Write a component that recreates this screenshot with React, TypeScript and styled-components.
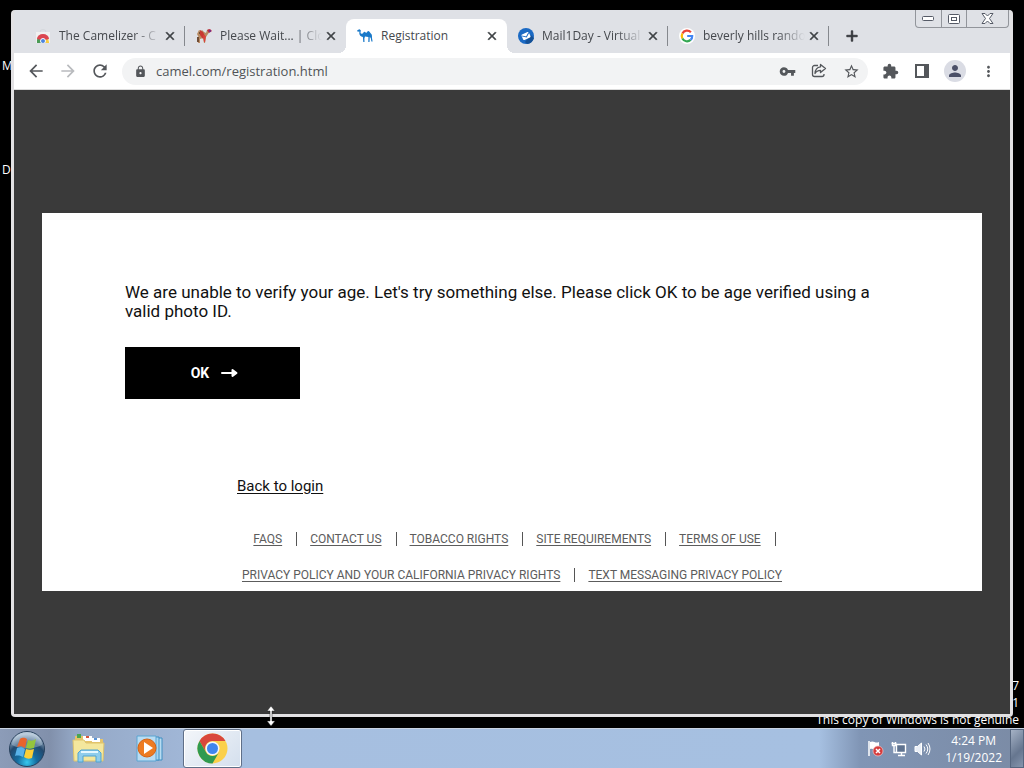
import React from 'react';
import styled, { createGlobalStyle } from 'styled-components';
import {
  MdAdd,
  MdArrowBack,
  MdArrowForward,
  MdClose,
  MdExtension,
  MdLock,
  MdMoreVert,
  MdPerson,
  MdRefresh,
  MdStarBorder,
  MdVpnKey,
} from 'react-icons/md';

const systemFont = '"Open Sans", "Noto Sans", sans-serif';

const GlobalStyle = createGlobalStyle`
  *, *::before, *::after { box-sizing: border-box; }
  body { margin: 0; background: #000; }
  button, input { font: inherit; color: inherit; }
  button { border: 0; padding: 0; background: none; }
`;

const Desktop = styled.div`
  position: relative;
  display: flex;
  flex-direction: column;
  min-height: 100vh;
  background: #000;
  font-family: ${systemFont};
  overflow: hidden;
`;

const WorkArea = styled.main`
  flex: 1;
  display: flex;
  padding: 10px 11px 11px 11px;
`;

const DesktopLabel = styled.span<{ $top: number }>`
  position: absolute;
  left: 2px;
  top: ${(p) => p.$top}px;
  font-size: 12px;
  line-height: 16px;
  color: #fff;
`;

const Watermark = styled.div`
  position: absolute;
  right: 5px;
  bottom: 40px;
  font-size: 12px;
  line-height: 17px;
  text-align: right;
  color: #fff;
`;

const BrowserWindow = styled.section`
  position: relative;
  flex: 1;
  min-width: 0;
  display: flex;
  flex-direction: column;
  border: solid #e2e1e3;
  border-width: 0 3px 3px;
  border-radius: 4px;
  background: #dfe1e6;
`;

const TabStrip = styled.header`
  display: flex;
  height: 43px;
  padding: 9px 0 0 10px;
`;

const Tab = styled.div<{ $active?: boolean; $divided?: boolean }>`
  position: relative;
  flex: 0 1 161px;
  min-width: 0;
  display: flex;
  align-items: center;
  padding: 0 8px 0 11px;
  border-radius: 8px 8px 0 0;
  background: ${(p) => (p.$active ? '#fff' : 'transparent')};

  &::before, &::after {
    content: '';
    position: absolute;
    bottom: 0;
    width: 8px;
    height: 8px;
    display: ${(p) => (p.$active ? 'block' : 'none')};
  }
  &::before {
    left: -8px;
    background: radial-gradient(circle at 0 0, transparent 8px, #fff 8px);
  }
  &::after {
    right: -8px;
    background: radial-gradient(circle at 100% 0, transparent 8px, #fff 8px);
  }
  ${(p) =>
    p.$divided &&
    `&::after {
      display: block;
      right: 0;
      bottom: 7px;
      width: 1px;
      height: 20px;
      background: #85888d;
    }`}
`;

const TabTitle = styled.button<{ $fade?: boolean }>`
  flex: 1;
  min-width: 0;
  overflow: hidden;
  white-space: nowrap;
  text-align: left;
  font-size: 12px;
  line-height: 20px;
  color: #45484d;
  ${(p) => p.$fade && 'mask-image: linear-gradient(90deg, #000 72%, transparent 98%);'}
`;

const TabIcon = styled.svg`
  flex: none;
  width: 16px;
  height: 16px;
  margin-right: 8px;
`;

const CloseTab = styled.button`
  display: flex;
  color: #3c4043;
  font-size: 14px;
  svg path:last-child { stroke: currentColor; stroke-width: 1; }
`;

const NewTab = styled.button`
  display: flex;
  align-items: center;
  margin-left: 14px;
  color: #303338;
  font-size: 18px;
  svg path:last-child { stroke: currentColor; stroke-width: 1; }
`;

const WindowControls = styled.div`
  position: absolute;
  top: 0;
  right: 1px;
  display: flex;
  border: 1px solid #92959b;
  border-top: 0;
  border-radius: 0 0 4px 4px;
`;

const WindowControl = styled.button<{ $wide?: boolean }>`
  display: flex;
  align-items: center;
  justify-content: center;
  width: ${(p) => (p.$wide ? 42 : 25)}px;
  height: 17px;
  & + & { border-left: 1px solid #92959b; }
`;

const Toolbar = styled.nav`
  display: flex;
  align-items: center;
  gap: 12px;
  height: 37px;
  padding: 0 12px;
  border-bottom: 1px solid #dcdcdc;
  background: #fff;
  color: #54575b;
`;

const ToolButton = styled.button<{ $faded?: boolean }>`
  flex: none;
  display: flex;
  align-items: center;
  justify-content: center;
  width: 20px;
  height: 20px;
  font-size: ${(p) => (p.$faded === undefined ? 17 : 20)}px;
  color: ${(p) => (p.$faded ? '#b9bbbe' : 'inherit')};
`;

const AddressBar = styled.div`
  flex: 1;
  min-width: 0;
  display: flex;
  align-items: center;
  gap: 12px;
  height: 27px;
  padding: 0 7px 0 12px;
  border-radius: 14px;
  background: #f2f3f4;
`;

const AddressLabel = styled.label`
  flex: 1;
  min-width: 0;
  display: flex;
  align-items: center;
  gap: 9px;
  font-size: 13px;
`;

const AddressInput = styled.input`
  flex: 1;
  min-width: 0;
  padding: 0;
  border: 0;
  outline: 0;
  line-height: 20px;
  background: transparent;
  color: #505357;
`;

const Avatar = styled.button`
  display: flex;
  align-items: center;
  justify-content: center;
  width: 22px;
  height: 22px;
  border-radius: 50%;
  background: #dadce4;
  color: #4b5068;
  font-size: 18px;
`;

const Page = styled.div`
  flex: 1;
  display: flex;
  flex-direction: column;
  justify-content: center;
  padding: 28px;
  background: #3a3a3a;
  font-family: Roboto, sans-serif;
`;

const Card = styled.article`
  padding: 70px 83px 8px;
  background: #fff;
  color: #111;
`;

const Message = styled.p`
  margin: 0 0 26px;
  font-size: 17px;
  line-height: 19px;
`;

const OkButton = styled.button`
  display: flex;
  align-items: center;
  justify-content: center;
  gap: 12px;
  width: 175px;
  height: 52px;
  padding-left: 4px;
  background: #000;
  color: #fff;
  font: bold 14px Roboto, sans-serif;
`;

const LowerBlock = styled.div`
  max-width: 550px;
  margin: 77px auto 0;
`;

const BackLink = styled.a`
  display: inline-block;
  font-size: 15px;
  line-height: 18px;
  color: #111;
  text-underline-offset: 2px;
`;

const FooterLinks = styled.ul`
  display: flex;
  flex-wrap: wrap;
  justify-content: center;
  row-gap: 20px;
  margin: 36px -13px 0;
  padding: 0;
  list-style: none;
`;

const FooterItem = styled.li`
  display: flex;
  align-items: center;
  gap: 14px;
  padding: 0 4px 0 9px;
  line-height: 16px;
  &:not(:last-child)::after {
    content: '';
    width: 1px;
    height: 14px;
    background: #555;
  }
  &:last-child { padding-right: 9px; }
`;

const FooterLink = styled.a`
  font-size: 12px;
  color: #5c5c5c;
  text-underline-offset: 2px;
`;

const Taskbar = styled.footer`
  display: flex;
  align-items: stretch;
  height: 40px;
  border-top: 1px solid #c9d3e2;
  background: linear-gradient(90deg, #8c9cb8 0, #8190ab 50px, #94a8c6 75px, #a0b6d6 180px, #a6bfe0 250px, #a6c0e1 80%, #8095b5 84%, #7b8ba5 100%);
`;

const StartButton = styled.button`
  width: 54px;
  margin-right: 2px;
  display: flex;
  align-items: center;
  justify-content: center;
`;

const TaskButton = styled.button<{ $active?: boolean }>`
  display: flex;
  align-items: center;
  justify-content: center;
  width: 59px;
  margin-left: 3px;
  border: 1px solid ${(p) => (p.$active ? '#5f6f88' : 'transparent')};
  border-radius: 3px;
  background: ${(p) => (p.$active ? 'linear-gradient(135deg, #f3f6fa, #d4dfed)' : 'none')};
  box-shadow: ${(p) => (p.$active ? 'inset 0 0 0 1px #fff' : 'none')};
`;

const Tray = styled.div`
  display: flex;
  align-items: center;
  gap: 7px;
  margin-left: auto;
`;

const TrayButton = styled.button`
  display: flex;
`;

const Clock = styled.time`
  margin: 0 8px 0 7px;
  font-size: 12px;
  line-height: 17px;
  text-align: center;
  color: #fff;
`;

const ShowDesktop = styled.button`
  align-self: stretch;
  width: 14px;
  margin-left: -7px;
  border: 1px solid #56667f;
  background: linear-gradient(135deg, #a5b2c6, #66768f 60%, #8595ad);
`;

const ResizeCursor = styled.svg`
  position: absolute;
  left: 266px;
  bottom: 41px;
`;

const WebStoreIcon = () => (
  <TabIcon viewBox="0 0 16 16">
    <path d="M5 4a3 2.500 0 0 1 6 0" fill="none" stroke="#d5d8dc" />
    <path d="M1 4h14v11H1z" fill="#f1f1f1" />
    <path d="M2 14a6 6 0 0 1 3-6l3 5v2H2z" fill="#4b9b56" />
    <path d="M14 14a6 6 0 0 0-3-5l-3 4v2h6z" fill="#f8cc42" />
    <path d="M2 11a6 5 0 0 1 12 0l-4 1H6z" fill="#db4651" />
    <circle cx="8" cy="13" r="2.500" fill="#4a83df" stroke="#fff" />
    <path d="M0 15h16v1H0z" fill="#dfe1e6" />
  </TabIcon>
);

const CamelizerIcon = () => (
  <TabIcon viewBox="0 0 16 16">
    <path d="M1 6l2-4 2 1 1-1 2 2 2 1 1-3 2-1 1 2-2 3-2 3-1 6H8l-1-5-3 1v4H2l1-5z" fill="#b88a62" />
    <path d="M4 2l3 2 2 4-2 3-3-4z" fill="#c83832" />
    <path d="M7 7l3 1-1 6H8z" fill="#dd403b" />
    <path d="M11 2l3-1 2 2-3 2z" fill="#bd2947" />
    <circle cx="14" cy="3" r="1" fill="#6d2f8c" />
    <path d="M1 9h2v5H1zM3 4h1v2H3z" fill="#6f4c35" />
  </TabIcon>
);

const CamelIcon = () => (
  <TabIcon viewBox="0 0 16 16">
    <path
      d="M.2 2.300L2.500 1.200l1.300 1-.3 2.500c.2 1 1 1.300 2 .9.900-.3 1-1.900 2-1.900s1 1.100 1.800 1.100 1-2 2.100-1.800c1.300.2 1.700 2 2.700 2.800 1 .8.900 2.700.9 4.200l.6 3.500h-1.200l-.6-3.200-1-1.500-.3 5.200h-1.200l.1-5-3.400-.6-.6 2.200.1 3.400H6.300L5.900 9.100C3.700 8.700 2.300 7 2.300 5.200l.1-1.600-1.800.1z"
      fill="#1979c9"
    />
  </TabIcon>
);

const MailIcon = () => (
  <TabIcon viewBox="0 0 16 16">
    <circle cx="8" cy="8" r="8" fill="#1b6ac4" />
    <path d="M7 14l6-7 3 3a8 8 0 0 1-7 6z" fill="#145197" />
    <g transform="rotate(-25 8 8)">
      <rect x="4" y="5" width="8" height="6" rx="1" fill="#fff" />
      <path d="M4 6l4 3 4-3" fill="none" stroke="#1b6ac4" />
    </g>
  </TabIcon>
);

const GoogleIcon = () => (
  <TabIcon viewBox="0 0 16 16">
    <circle cx="8" cy="8" r="8" fill="#fff" />
    <g fill="none" strokeWidth="2.200">
      <path d="M11.900 4.300A5.200 5.200 0 0 0 3.400 5.500" stroke="#ea4335" />
      <path d="M3.400 5.500a5.200 5.200 0 0 0 0 5" stroke="#fbbc05" />
      <path d="M3.400 10.500a5.200 5.200 0 0 0 8.200 1.400" stroke="#34a853" />
      <path d="M11.600 11.900A5 5 0 0 0 13.200 8H8.200" stroke="#4285f4" />
    </g>
  </TabIcon>
);

const ShareIcon = () => (
  <svg width="16" height="16" viewBox="0 0 16 16" fill="none" stroke="currentColor" strokeWidth="1.300" strokeLinejoin="round">
    <path d="M7 2.500H3.500A2 2 0 0 0 1.500 4.500v7a2 2 0 0 0 2 2h7.500a2 2 0 0 0 2-2V11" />
    <path d="M9.500 1.500l5 4-5 4V7.300C7 7.300 5.200 8.300 4 10.500c.2-4 2.200-6.300 5.500-6.700z" />
  </svg>
);

const SidePanelIcon = () => (
  <svg width="14" height="14" viewBox="0 0 14 14">
    <path d="M1 1h12v12H1z" fill="none" stroke="currentColor" strokeWidth="2" />
    <path d="M9 1h4v12H9z" fill="currentColor" />
  </svg>
);

const ArrowIcon = () => (
  <svg width="17" height="10" viewBox="0 0 17 10">
    <path d="M1 5h13M11.500 2l4 3-4 3z" fill="#fff" stroke="#fff" strokeWidth="2" strokeLinecap="round" strokeLinejoin="round" />
  </svg>
);

const StartOrb = () => (
  <svg width="38" height="38" viewBox="0 0 38 38">
    <defs>
      <radialGradient id="orb" cx="50%" cy="88%" r="80%">
        <stop offset="0" stopColor="#37c8ee" />
        <stop offset=".35" stopColor="#156c9f" />
        <stop offset=".7" stopColor="#23496e" />
        <stop offset="1" stopColor="#a9bccf" />
      </radialGradient>
    </defs>
    <circle cx="19" cy="19" r="17.500" fill="url(#orb)" stroke="#28415d" />
    <path d="M4 15a15 13 0 0 1 30 0c-8 4-22 5-30 0z" fill="#dbe8f3" opacity=".35" />
    <path d="M12 9c3-2 5-1 7 0l-2 9c-3-2-5-2-8-1z" fill="#e8642c" />
    <path d="M20 10c3 1 5 1 8-1l-2 9c-3 1-5 1-8 0z" fill="#94c53d" />
    <path d="M9 18c3-1 5-1 8 1l-2 8c-2-1-5-2-8-1z" fill="#59b2e8" />
    <path d="M18 19c3 1 5 1 8 0l-2 9c-3 1-5 1-8-1z" fill="#fbcf36" />
  </svg>
);

const FolderIcon = () => (
  <svg width="34" height="32" viewBox="0 0 34 32">
    <path d="M3 3h8l2 3h18v22H3z" fill="#e5c46b" />
    <path d="M5 1h4v4H5z" fill="#4aa551" />
    <path d="M11 3h9v5h-9z" fill="#fff" />
    <path d="M14 3h3v2h-3z" fill="#d8543c" />
    <path d="M20 5h8v4h-8z" fill="#fff" />
    <path d="M22 5h3v2h-3z" fill="#5a95d8" />
    <path d="M1 7h11l2 3h18l-1 18H2z" fill="#f4e79d" stroke="#dec36c" />
    <path d="M6 29v-9l3-3h17l3 3v9h-5v-6H11v6z" fill="#8fcdec" stroke="#4fa3d1" />
    <path d="M9 19h17" stroke="#e5f8ff" strokeWidth="2" />
  </svg>
);

const MediaPlayerIcon = () => (
  <svg width="29" height="28" viewBox="0 0 29 28">
    <path d="M13 3h13v22H13z" fill="#b9dcf1" stroke="#3f8fc3" />
    <path d="M6 2h17v23H6z" fill="#a8d5f0" stroke="#3f8fc3" />
    <path d="M1 1h19v25H1z" fill="#b9dcf3" stroke="#5aa5d2" />
    <circle cx="11" cy="13" r="9" fill="#ed7b22" stroke="#d46215" />
    <path d="M8 7l9 6-9 6z" fill="#fff" />
  </svg>
);

const ChromeIcon = () => (
  <svg width="31" height="31" viewBox="0 0 31 31">
    <circle cx="15.500" cy="15.500" r="15" fill="#fbd04b" />
    <path d="M2.500 8A15 15 0 0 1 28.500 8H15.500a7.500 7.500 0 0 0-6.500 11.200z" fill="#d9473c" />
    <path d="M2.500 8A15 15 0 0 0 15.500 30.500L22 19.200a7.500 7.500 0 0 1-13 0z" fill="#2f9a50" />
    <circle cx="15.500" cy="15.500" r="7" fill="#f4f7fb" />
    <circle cx="15.500" cy="15.500" r="5.500" fill="#4086ee" />
  </svg>
);

const FlagIcon = () => (
  <svg width="17" height="17" viewBox="0 0 17 17">
    <path d="M2 1v15" stroke="#fff" strokeWidth="1.500" />
    <path d="M3 2c4-2 5 2 9 0v7c-4 2-5-1-9 0z" fill="#fff" />
    <circle cx="11" cy="11" r="5" fill="#d63c3c" stroke="#f3c7c7" strokeWidth=".7" />
    <path d="M9 9l4 4M13 9l-4 4" stroke="#fff" strokeWidth="1.500" />
  </svg>
);

const NetworkIcon = () => (
  <svg width="16" height="16" viewBox="0 0 16 16" fill="none" stroke="#fff" strokeWidth="1.400">
    <path d="M5.500 3.500h9v8h-9z" fill="#5f7390" />
    <path d="M7 14.500h7M10.500 12v2M1.500 1v3.500h3V1M3 4.500v7h2M.500 2.500h5" />
  </svg>
);

const VolumeIcon = () => (
  <svg width="17" height="16" viewBox="0 0 17 16" fill="none" stroke="#fff">
    <path d="M1 5.500h2.500L7.500 2v12l-4-3.500H1z" fill="#e9eef6" />
    <path d="M10 5.500q2 2.500 0 5M12 3.500q3.500 4.500 0 9M14 2q4 6 0 12" />
  </svg>
);

const tabs = [
  { title: 'The Camelizer - C', icon: <WebStoreIcon />, divided: true, fade: true },
  { title: 'Please Wait... | Clo', icon: <CamelizerIcon />, fade: true },
  { title: 'Registration', icon: <CamelIcon />, active: true },
  { title: 'Mail1Day - Virtual', icon: <MailIcon />, divided: true, fade: true },
  { title: 'beverly hills rando', icon: <GoogleIcon />, divided: true, fade: true },
];

const footerLinks = [
  'FAQS',
  'CONTACT US',
  'TOBACCO RIGHTS',
  'SITE REQUIREMENTS',
  'TERMS OF USE',
  'PRIVACY POLICY AND YOUR CALIFORNIA PRIVACY RIGHTS',
  'TEXT MESSAGING PRIVACY POLICY',
];

export default function App() {
  return (
    <Desktop>
      <GlobalStyle />
      <DesktopLabel $top={58}>M</DesktopLabel>
      <DesktopLabel $top={162}>D</DesktopLabel>
      <Watermark>
        <div>7</div>
        <div>1</div>
        <div>This copy of Windows is not genuine</div>
      </Watermark>

      <WorkArea>
        <BrowserWindow aria-label="Browser">
          <TabStrip>
            {tabs.map((tab) => (
              <Tab key={tab.title} $active={tab.active} $divided={tab.divided}>
                {tab.icon}
                <TabTitle $fade={tab.fade}>{tab.title}</TabTitle>
                <CloseTab aria-label="Close tab"><MdClose /></CloseTab>
              </Tab>
            ))}
            <NewTab aria-label="New tab"><MdAdd /></NewTab>
            <WindowControls>
              <WindowControl aria-label="Minimize">
                <svg width="13" height="6" viewBox="0 0 13 6">
                  <rect x=".5" y=".5" width="11" height="4" rx="1" fill="#fff" stroke="#555a66" />
                </svg>
              </WindowControl>
              <WindowControl aria-label="Maximize">
                <svg width="12" height="10" viewBox="0 0 12 10" fill="#fff" stroke="#555a66">
                  <rect x=".5" y=".5" width="11" height="9" rx="1" />
                  <rect x="3.500" y="3.500" width="5" height="3" />
                </svg>
              </WindowControl>
              <WindowControl $wide aria-label="Close">
                <svg width="13" height="11" viewBox="0 0 13 11">
                  <path d="M1 .5h3l2.500 2.500L9 .5h3L8.500 5.500l3.500 5H9L6.500 8 4 10.500H1l3.500-5z" fill="#fff" stroke="#555a66" />
                </svg>
              </WindowControl>
            </WindowControls>
          </TabStrip>

          <Toolbar aria-label="Browser toolbar">
            <ToolButton $faded={false} aria-label="Back"><MdArrowBack /></ToolButton>
            <ToolButton $faded aria-label="Forward"><MdArrowForward /></ToolButton>
            <ToolButton $faded={false} aria-label="Reload"><MdRefresh /></ToolButton>
            <AddressBar>
              <AddressLabel>
                <MdLock aria-label="Address" />
                <AddressInput type="text" defaultValue="camel.com/registration.html" />
              </AddressLabel>
              <ToolButton aria-label="Passwords"><MdVpnKey /></ToolButton>
              <ToolButton aria-label="Share"><ShareIcon /></ToolButton>
              <ToolButton aria-label="Bookmark"><MdStarBorder /></ToolButton>
            </AddressBar>
            <ToolButton aria-label="Extensions"><MdExtension /></ToolButton>
            <ToolButton aria-label="Side panel"><SidePanelIcon /></ToolButton>
            <Avatar aria-label="Profile"><MdPerson /></Avatar>
            <ToolButton aria-label="Menu"><MdMoreVert /></ToolButton>
          </Toolbar>

          <Page>
            <Card>
              <Message>
                We are unable to verify your age. Let's try something else. Please click OK to be age
                verified using a valid photo ID.
              </Message>
              <OkButton>OK<ArrowIcon /></OkButton>
              <LowerBlock>
                <BackLink href="#login">Back to login</BackLink>
                <FooterLinks>
                  {footerLinks.map((label) => (
                    <FooterItem key={label}><FooterLink href="#">{label}</FooterLink></FooterItem>
                  ))}
                </FooterLinks>
              </LowerBlock>
            </Card>
          </Page>
        </BrowserWindow>
      </WorkArea>

      <Taskbar>
        <StartButton aria-label="Start"><StartOrb /></StartButton>
        <TaskButton aria-label="File Explorer"><FolderIcon /></TaskButton>
        <TaskButton aria-label="Media Player"><MediaPlayerIcon /></TaskButton>
        <TaskButton $active aria-label="Chrome"><ChromeIcon /></TaskButton>
        <Tray>
          <TrayButton aria-label="Action Center"><FlagIcon /></TrayButton>
          <TrayButton aria-label="Network"><NetworkIcon /></TrayButton>
          <TrayButton aria-label="Volume"><VolumeIcon /></TrayButton>
          <Clock>
            <div>4:24 PM</div>
            <div>1/19/2022</div>
          </Clock>
          <ShowDesktop aria-label="Show desktop" />
        </Tray>
      </Taskbar>

      <ResizeCursor width="10" height="22" viewBox="0 0 10 22">
        <path d="M5 1L1 6h3v10H1l4 5 4-5H6V6h3z" fill="#fff" stroke="#222" strokeWidth=".5" />
      </ResizeCursor>
    </Desktop>
  );
}
